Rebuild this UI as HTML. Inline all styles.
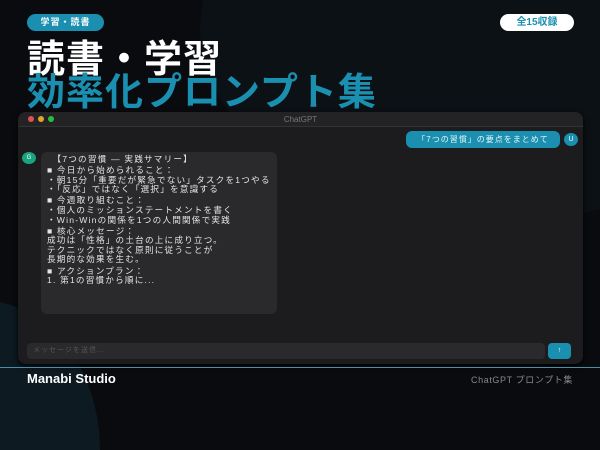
<!DOCTYPE html>
<html><head><meta charset="utf-8"><style>
*{margin:0;padding:0;box-sizing:border-box}
html,body{width:600px;height:450px;overflow:hidden;background:#0a0b0f}
body{position:relative;font-family:"Liberation Sans","Noto Sans CJK JP",sans-serif}
.a{position:absolute}
.clip{left:0;top:0;width:600px;height:450px;overflow:hidden}
.c1{left:-140px;top:300px;width:240px;height:300px;border-radius:50%;background:#0d1a22}
.c2{left:200px;top:-160px;width:600px;height:380px;border-radius:50%;background:#0c1116}
.b1{left:27px;top:14px;width:77px;height:17px;border-radius:9px;background:#1a8fb0;color:#fff;font-size:9px;font-weight:bold;line-height:17px;text-align:center;letter-spacing:1px}
.b2{left:500px;top:14px;width:74px;height:17px;border-radius:9px;background:#fff;color:#1a8fb0;font-size:10px;font-weight:bold;line-height:17px;text-align:center}
.t1{left:27px;top:41px;font-size:38px;font-weight:bold;color:#fff;line-height:38px;white-space:nowrap;letter-spacing:1px}
.t2{left:27px;top:74px;font-size:38px;font-weight:bold;color:#1a8fb0;line-height:38px;white-space:nowrap;letter-spacing:1px}
.win{left:18px;top:112px;width:565px;height:252px;border-radius:8px;background:#1c1c1e;overflow:hidden;box-shadow:0 2px 6px #000}
.bar{left:0;top:0;width:565px;height:15px;background:#232325;border-bottom:1px solid #333;color:#777;font-size:8px;text-align:center;line-height:15px}
.dot{top:4px;width:6px;height:6px;border-radius:50%}
.ub{left:388px;top:19px;width:154px;height:17px;border-radius:6px;background:#1a8fb0;color:#e8f6fa;font-size:8px;line-height:17px;text-align:center;letter-spacing:1px;white-space:nowrap}
.ua{left:546px;top:21px;width:14px;height:13px;border-radius:50%;background:#1a8fb0;color:#fff;font-size:7px;text-align:center;line-height:13px}
.ga{left:4px;top:40px;width:14px;height:12px;border-radius:50%;background:#19a37f;color:#fff;font-size:6px;text-align:center;line-height:12px}
.gb{left:23px;top:40px;width:236px;height:162px;border-radius:6px;background:#2a2a2c;color:#e4e4e4;font-size:8.6px;line-height:9.6px;padding:3px 6px;white-space:nowrap;letter-spacing:1.2px}
.gb p{margin-bottom:1.5px}
.in{left:9px;top:231px;width:518px;height:16px;border-radius:4px;background:#2a2a2c;color:#555;font-size:7px;line-height:16px;padding-left:6px;letter-spacing:1px}
.sb{left:530px;top:231px;width:23px;height:16px;border-radius:4px;background:#1a8fb0;color:#fff;font-size:7px;text-align:center;line-height:16px}
.line{left:0;top:367px;width:600px;height:1px;background:#4a8fa8}
.ms{left:27px;top:371px;color:#fff;font-size:13px;font-weight:bold}
.rt{right:27px;top:373px;color:#888;font-size:9px;letter-spacing:0.6px}
</style></head><body>
<div class="a clip"><div class="a c2"></div><div class="a c1"></div></div>
<div class="a b1">学習・読書</div>
<div class="a b2">全15収録</div>
<div class="a t1">読書・学習</div>
<div class="a t2">効率化プロンプト集</div>
<div class="a win">
<div class="a bar">ChatGPT</div>
<div class="a dot" style="left:10px;background:#e0524f"></div>
<div class="a dot" style="left:20px;background:#e0a52d"></div>
<div class="a dot" style="left:30px;background:#27c03e"></div>
<div class="a ub">「7つの習慣」の要点をまとめて</div>
<div class="a ua">U</div>
<div class="a ga">G</div>
<div class="a gb">
<p>　【7つの習慣 — 実践サマリー】</p>
<p>■ 今日から始められること：<br>・朝15分「重要だが緊急でない」タスクを1つやる<br>・「反応」ではなく「選択」を意識する</p>
<p>■ 今週取り組むこと：<br>・個人のミッションステートメントを書く<br>・Win-Winの関係を1つの人間関係で実践</p>
<p>■ 核心メッセージ：<br>成功は「性格」の土台の上に成り立つ。<br>テクニックではなく原則に従うことが<br>長期的な効果を生む。</p>
<p>■ アクションプラン：<br>1. 第1の習慣から順に...</p>
</div>
<div class="a in">メッセージを送信...</div>
<div class="a sb">↑</div>
</div>
<div class="a line"></div>
<div class="a ms">Manabi Studio</div>
<div class="a rt">ChatGPT プロンプト集</div>
</body></html>
